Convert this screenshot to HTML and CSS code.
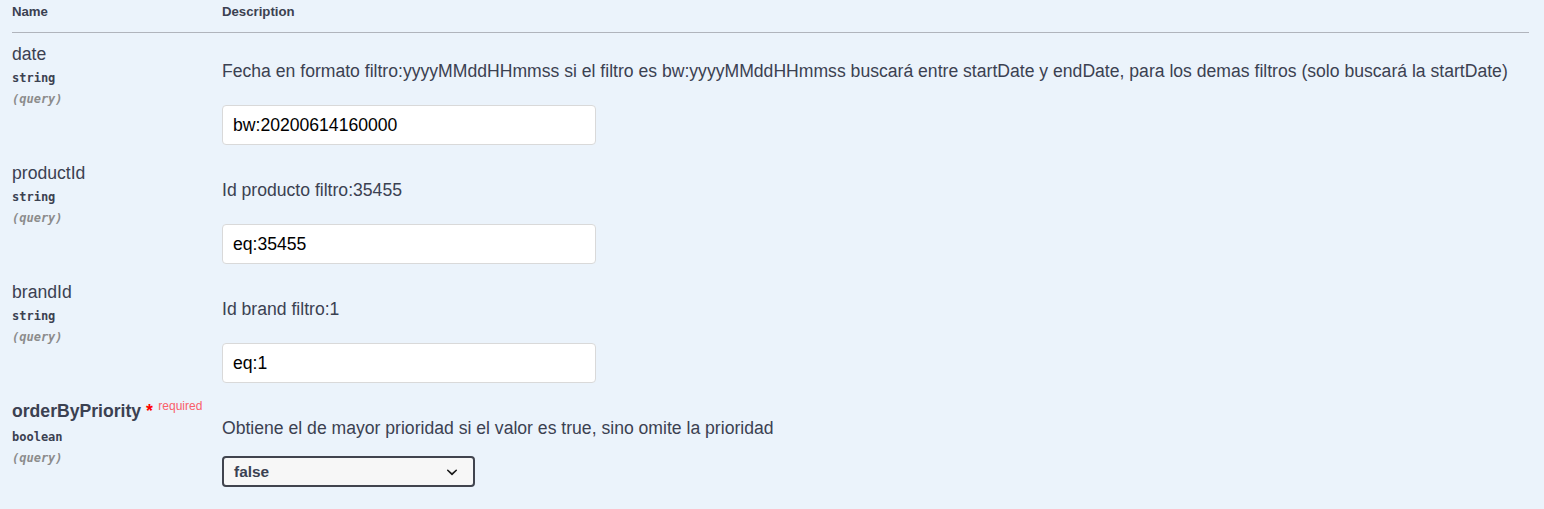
FILE: index.html
```html
<!DOCTYPE html>
<html lang="es">
<head>
<meta charset="utf-8">
<link rel="stylesheet" href="styles.css">
</head>
<body>
<div class="params">
  <div class="head">
    <div class="th">Name</div>
    <div class="th">Description</div>
  </div>

  <div class="row">
    <div class="col-name">
      <div class="pname">date</div>
      <div class="ptype">string</div>
      <div class="pin">(query)</div>
    </div>
    <div class="col-desc">
      <p class="desc">Fecha en formato filtro:yyyyMMddHHmmss si el filtro es bw:yyyyMMddHHmmss buscará entre startDate y endDate, para los demas filtros (solo buscará la startDate)</p>
      <div class="input">bw:20200614160000</div>
    </div>
  </div>

  <div class="row">
    <div class="col-name">
      <div class="pname">productId</div>
      <div class="ptype">string</div>
      <div class="pin">(query)</div>
    </div>
    <div class="col-desc">
      <p class="desc">Id producto filtro:35455</p>
      <div class="input">eq:35455</div>
    </div>
  </div>

  <div class="row">
    <div class="col-name">
      <div class="pname">brandId</div>
      <div class="ptype">string</div>
      <div class="pin">(query)</div>
    </div>
    <div class="col-desc">
      <p class="desc">Id brand filtro:1</p>
      <div class="input">eq:1</div>
    </div>
  </div>

  <div class="row">
    <div class="col-name">
      <div class="pname req">orderByPriority<span class="star">&nbsp;*</span><span class="required">required</span></div>
      <div class="ptype">boolean</div>
      <div class="pin">(query)</div>
    </div>
    <div class="col-desc">
      <p class="desc">Obtiene el de mayor prioridad si el valor es true, sino omite la prioridad</p>
      <div class="select">
        <span>false</span>
        <svg class="chev" width="22" height="22" viewBox="0 0 20 20"><path d="M13.418 7.859a.695.695 0 0 1 .978 0 .68.68 0 0 1 0 .969l-3.908 3.83a.697.697 0 0 1-.979 0l-3.908-3.83a.68.68 0 0 1 0-.969.695.695 0 0 1 .978 0L10 11l3.418-3.141z" fill="#1b1b1b"/></svg>
      </div>
    </div>
  </div>
</div>
</body>
</html>
```
FILE: styles.css
```css
html, body {
  margin: 0;
  padding: 0;
  background: #ebf3fb;
}
body {
  font-family: "Liberation Sans", Arial, sans-serif;
  color: #3b4151;
  height: 509px;
  overflow: hidden;
}
.params {
  margin: 0 15px 0 12px;
}
.head {
  display: grid;
  grid-template-columns: 210px 1fr;
  height: 32px;
  border-bottom: 1px solid #b0b4bc;
}
.th {
  font-size: 13.2px;
  font-weight: 700;
  line-height: 15px;
  padding-top: 4px;
}
.row {
  display: grid;
  grid-template-columns: 210px 1fr;
  height: 119px;
}
.col-name {
  padding-top: 11px;
}
.pname {
  font-size: 17.6px;
  line-height: 20px;
  white-space: nowrap;
}
.pname.req {
  font-weight: 700;
}
.star {
  color: #ff0000;
}
.required {
  color: #f9606a;
  font-size: 12px;
  font-weight: 400;
  position: relative;
  top: -6.6px;
  padding: 0 5.5px;
}
.ptype {
  font-family: "DejaVu Sans Mono", monospace;
  font-size: 12px;
  font-weight: 700;
  line-height: 14px;
  margin-top: 7px;
}
.pin {
  font-family: "DejaVu Sans Mono", monospace;
  font-size: 12px;
  font-style: italic;
  font-weight: 700;
  color: #8c8c8c;
  line-height: 14px;
  margin-top: 7px;
}
.col-desc {
  padding-top: 28px;
}
.desc {
  margin: 0;
  font-size: 17.6px;
  line-height: 20px;
  white-space: nowrap;
}
.input {
  margin-top: 24px;
  width: 374px;
  height: 40px;
  box-sizing: border-box;
  background: #fff;
  border: 1px solid #d9d9d9;
  border-radius: 4px;
  padding: 0 10px;
  font-size: 17.6px;
  line-height: 38px;
  color: #000;
}
.select {
  margin-top: 18px;
  width: 253px;
  height: 31px;
  box-sizing: border-box;
  background: #f7f7f7;
  border: 2px solid #41444e;
  border-radius: 4px;
  padding: 0 10px;
  display: flex;
  align-items: center;
  justify-content: space-between;
  font-size: 15.4px;
  font-weight: 700;
  color: #3b4151;
}
.chev {
  display: block;
  margin-right: 0;
}
```
